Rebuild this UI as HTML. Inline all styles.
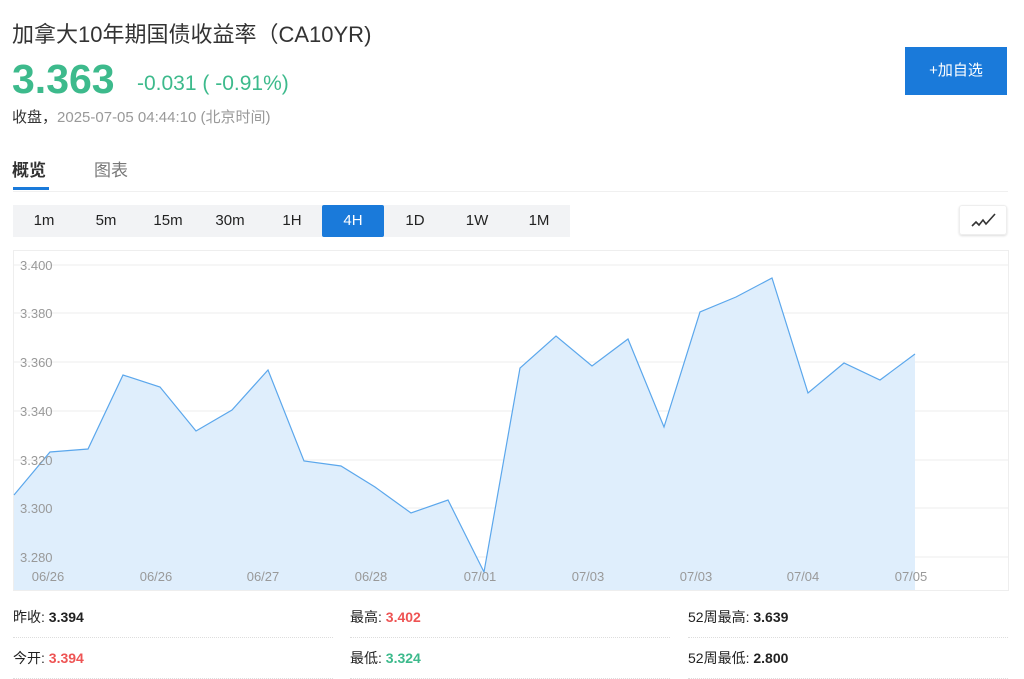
<!DOCTYPE html><html><head><meta charset="utf-8"><style>
*{margin:0;padding:0;box-sizing:border-box}
body{width:1024px;height:679px;background:#fff;font-family:"Liberation Sans","Noto Sans CJK SC",sans-serif;position:relative;overflow:hidden;color:#222}
.a{position:absolute;white-space:nowrap}
.tf{position:absolute;top:205px;height:32px;line-height:32px;text-align:center;font-size:15px;color:#222}
.st{position:absolute;font-size:14px;height:41px;line-height:41px;border-bottom:1px dotted #ddd;width:320px}
.st b{font-weight:bold}
</style></head><body>
<div class="a" style="left:12px;top:17px;font-size:22px;color:#333">加拿大10年期国债收益率（CA10YR)</div>
<div class="a" style="left:12px;top:56px;font-size:41px;font-weight:bold;color:#3dba8c">3.363</div>
<div class="a" style="left:137px;top:72px;font-size:21px;color:#3dba8c">-0.031 ( -0.91%)</div>
<div class="a" style="left:12px;top:106px;font-size:15px;color:#333">收盘，<span style="color:#999">2025-07-05 04:44:10 (北京时间)</span></div>
<div class="a" style="left:905px;top:47px;width:102px;height:48px;background:#1a7ada;color:#fff;font-size:15px;line-height:48px;text-align:center">+加自选</div>
<div class="a" style="left:12px;top:156px;font-size:17px;font-weight:bold;color:#333">概览</div>
<div class="a" style="left:94px;top:156px;font-size:17px;color:#777">图表</div>
<div class="a" style="left:13px;top:187px;width:36px;height:3px;background:#1a7ada"></div>
<div class="a" style="left:13px;top:191px;width:995px;height:1px;background:#f0f0f0"></div>
<div class="a" style="left:13px;top:205px;width:557px;height:32px;background:#f2f3f5"></div>
<div class="tf" style="left:13px;width:62px">1m</div>
<div class="tf" style="left:75px;width:62px">5m</div>
<div class="tf" style="left:137px;width:62px">15m</div>
<div class="tf" style="left:199px;width:62px">30m</div>
<div class="tf" style="left:261px;width:62px">1H</div>
<div class="tf" style="left:322px;width:62px;background:#1a7ada;color:#fff;border-radius:2px">4H</div>
<div class="tf" style="left:384px;width:62px">1D</div>
<div class="tf" style="left:446px;width:62px">1W</div>
<div class="tf" style="left:508px;width:62px">1M</div>
<div class="a" style="left:959px;top:205px;width:48px;height:30px;border:1px solid #eee;border-radius:3px;box-shadow:0 1px 2px #ddd">
<svg width="48" height="30" viewBox="0 0 48 30"><path d="M12 20 L16 16 L19 19 L23 14 L26 18 L35 8" fill="none" stroke="#333" stroke-width="1.6"/></svg></div>
<svg class="a" style="left:0;top:0" width="1024" height="600">
<rect x="13.5" y="250.5" width="995" height="340" fill="none" stroke="#eee"/>
<g stroke="#eee"><line x1="14" x2="1008" y1="265" y2="265"/><line x1="14" x2="1008" y1="313" y2="313"/><line x1="14" x2="1008" y1="362" y2="362"/><line x1="14" x2="1008" y1="411" y2="411"/><line x1="14" x2="1008" y1="460" y2="460"/><line x1="14" x2="1008" y1="508" y2="508"/><line x1="14" x2="1008" y1="557" y2="557"/></g>
<path d="M14 495 L50 452 L88 449 L123 375 L160 387 L196 431 L232 410 L268 370 L304 461 L341 466 L375 487 L411 513 L448 500 L484 572 L520 368 L556 336 L592 366 L628 339 L664 427 L700 312 L736 297 L772 278 L808 393 L844 363 L880 380 L915 354 L915 590 L14 590Z" fill="#dfeefc"/>
<path d="M14 495 L50 452 L88 449 L123 375 L160 387 L196 431 L232 410 L268 370 L304 461 L341 466 L375 487 L411 513 L448 500 L484 572 L520 368 L556 336 L592 366 L628 339 L664 427 L700 312 L736 297 L772 278 L808 393 L844 363 L880 380 L915 354" fill="none" stroke="#5ba7ec" stroke-width="1.2"/>
<g font-size="13" fill="#999" font-family="Liberation Sans"><text x="20" y="270">3.400</text><text x="20" y="318">3.380</text><text x="20" y="367">3.360</text><text x="20" y="416">3.340</text><text x="20" y="465">3.320</text><text x="20" y="513">3.300</text><text x="20" y="562">3.280</text>
<g text-anchor="middle"><text x="48" y="581">06/26</text><text x="156" y="581">06/26</text><text x="263" y="581">06/27</text><text x="371" y="581">06/28</text><text x="480" y="581">07/01</text><text x="588" y="581">07/03</text><text x="696" y="581">07/03</text><text x="803" y="581">07/04</text><text x="911" y="581">07/05</text></g></g>
</svg>
<div class="st" style="left:13px;top:597px">昨收: <b>3.394</b></div>
<div class="st" style="left:350px;top:597px">最高: <b style="color:#ee5454">3.402</b></div>
<div class="st" style="left:688px;top:597px">52周最高: <b>3.639</b></div>
<div class="st" style="left:13px;top:638px">今开: <b style="color:#ee5454">3.394</b></div>
<div class="st" style="left:350px;top:638px">最低: <b style="color:#3dba8c">3.324</b></div>
<div class="st" style="left:688px;top:638px">52周最低: <b>2.800</b></div>
</body></html>
